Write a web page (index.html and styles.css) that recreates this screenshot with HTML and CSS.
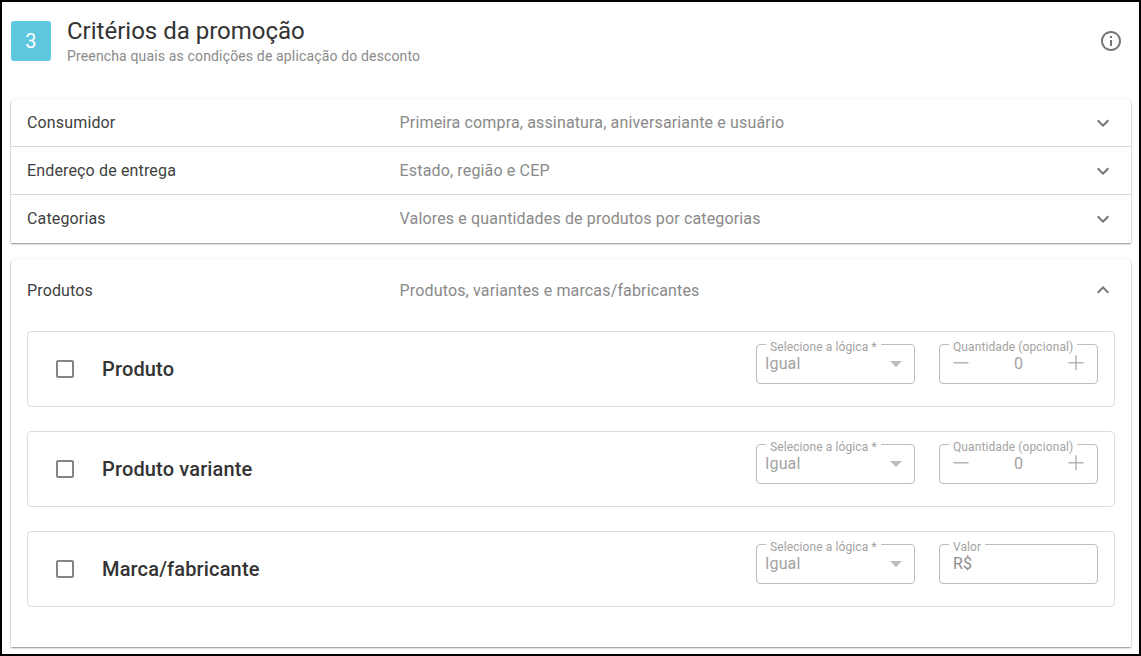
FILE: index.html
```html
<!DOCTYPE html>
<html lang="pt-BR">
<head>
  <meta charset="UTF-8">
  <title>Critérios da promoção</title>
  <link rel="stylesheet" href="styles.css">
</head>
<body>
<div class="frame">

  <!-- Header -->
  <div class="step-header">
    <div class="step-badge">3</div>
    <div class="step-titles">
      <h2>Critérios da promoção</h2>
      <p>Preencha quais as condições de aplicação do desconto</p>
    </div>
    <svg class="info-icon" width="24" height="24" viewBox="0 0 24 24"><path fill="#757575" d="M11 7h2v2h-2zm0 4h2v6h-2zm1-9C6.48 2 2 6.48 2 12s4.48 10 10 10 10-4.48 10-10S17.52 2 12 2zm0 18c-4.41 0-8-3.59-8-8s3.59-8 8-8 8 3.59 8 8-3.59 8-8 8z"/></svg>
  </div>

  <!-- Closed panels -->
  <div class="panel">
    <div class="panel-row">
      <span class="panel-name">Consumidor</span>
      <span class="panel-desc">Primeira compra, assinatura, aniversariante e usuário</span>
      <svg class="chevron" width="24" height="24" viewBox="0 0 24 24"><path fill="#757575" d="M16.59 8.59 12 13.17 7.41 8.59 6 10l6 6 6-6z"/></svg>
    </div>
    <div class="panel-row">
      <span class="panel-name">Endereço de entrega</span>
      <span class="panel-desc">Estado, região e CEP</span>
      <svg class="chevron" width="24" height="24" viewBox="0 0 24 24"><path fill="#757575" d="M16.59 8.59 12 13.17 7.41 8.59 6 10l6 6 6-6z"/></svg>
    </div>
    <div class="panel-row">
      <span class="panel-name">Categorias</span>
      <span class="panel-desc">Valores e quantidades de produtos por categorias</span>
      <svg class="chevron" width="24" height="24" viewBox="0 0 24 24"><path fill="#757575" d="M16.59 8.59 12 13.17 7.41 8.59 6 10l6 6 6-6z"/></svg>
    </div>
  </div>

  <!-- Open panel -->
  <div class="panel panel-open">
    <div class="panel-row panel-row-open">
      <span class="panel-name">Produtos</span>
      <span class="panel-desc">Produtos, variantes e marcas/fabricantes</span>
      <svg class="chevron" width="24" height="24" viewBox="0 0 24 24"><path fill="#757575" d="M12 8 6 14l1.41 1.41L12 10.83l4.59 4.58L18 14z"/></svg>
    </div>

    <div class="rule-list">
      <div class="rule-card">
        <span class="check"></span>
        <span class="rule-name">Produto</span>
        <div class="field">
          <span class="field-label">Selecione a lógica *</span>
          <span class="field-value">Igual</span>
          <span class="caret"></span>
        </div>
        <div class="field field-qty">
          <span class="field-label">Quantidade (opcional)</span>
          <svg width="16" height="16" viewBox="0 0 16 16"><path fill="#b5b5b5" d="M0.500 7h15v1.500H0.500z"/></svg>
          <span class="qty-value">0</span>
          <svg width="16" height="16" viewBox="0 0 16 16"><path fill="#b5b5b5" d="M0.500 7h6.750V0.250h1.500V7H15.500v1.500H8.750v6.750h-1.500V8.500H0.500z"/></svg>
        </div>
      </div>

      <div class="rule-card">
        <span class="check"></span>
        <span class="rule-name">Produto variante</span>
        <div class="field">
          <span class="field-label">Selecione a lógica *</span>
          <span class="field-value">Igual</span>
          <span class="caret"></span>
        </div>
        <div class="field field-qty">
          <span class="field-label">Quantidade (opcional)</span>
          <svg width="16" height="16" viewBox="0 0 16 16"><path fill="#b5b5b5" d="M0.500 7h15v1.500H0.500z"/></svg>
          <span class="qty-value">0</span>
          <svg width="16" height="16" viewBox="0 0 16 16"><path fill="#b5b5b5" d="M0.500 7h6.750V0.250h1.500V7H15.500v1.500H8.750v6.750h-1.500V8.500H0.500z"/></svg>
        </div>
      </div>

      <div class="rule-card">
        <span class="check"></span>
        <span class="rule-name">Marca/fabricante</span>
        <div class="field">
          <span class="field-label">Selecione a lógica *</span>
          <span class="field-value">Igual</span>
          <span class="caret"></span>
        </div>
        <div class="field field-money">
          <span class="field-label">Valor</span>
          <span class="field-value">R$</span>
        </div>
      </div>
    </div>
  </div>

</div>
</body>
</html>
```

FILE: styles.css
```css
* { box-sizing: border-box; }

html, body { margin: 0; padding: 0; }

body {
  font-family: Roboto, "Liberation Sans", sans-serif;
  background: #fff;
  color: #2b2b2b;
  letter-spacing: 0.15px;
}

.frame {
  width: 1141px;
  height: 656px;
  border: 2px solid #000;
  padding: 19px 8px 0 9px;
  overflow: hidden;
}

/* Header */
.step-header {
  display: flex;
  align-items: center;
  height: 40px;
  margin-bottom: 38px;
}

.step-badge {
  width: 40px;
  height: 40px;
  border-radius: 3px;
  background: #5fc6e0;
  color: #fff;
  font-size: 20px;
  display: flex;
  align-items: center;
  justify-content: center;
  margin-right: 16px;
}

.step-titles { flex: 1; padding-top: 1px; }

.step-titles h2 {
  margin: 0;
  font-size: 24px;
  font-weight: 400;
  line-height: 26px;
  letter-spacing: 0;
  color: #333;
}

.step-titles p {
  margin: 3px 0 0;
  font-size: 14px;
  line-height: 18px;
  color: #8a8a8a;
}

.info-icon { margin-right: 8px; }

/* Panels */
.panel {
  background: #fff;
  border-radius: 4px 4px 0 0;
  box-shadow: 0 1px 2px rgba(0,0,0,0.45), 0 0 2px rgba(0,0,0,0.06);
  margin-bottom: 16px;
}

.panel-row {
  display: flex;
  align-items: center;
  height: 48px;
  padding: 0 16px;
  border-bottom: 1px solid #d6d6d6;
  font-size: 16px;
}

.panel-row:last-child { border-bottom: none; padding-bottom: 1px; }

.panel-row-open { height: 64px; border-bottom: none; padding-bottom: 2px; }

.panel-name { width: 372.6px; color: #3f3f3f; }

.panel-desc { flex: 1; color: #8a8a8a; }

.panel-open { height: 388px; }

/* Rule cards */
.rule-list {
  display: flex;
  flex-direction: column;
  gap: 24px;
  padding: 8px 16px 0;
}

.rule-card {
  display: flex;
  align-items: center;
  height: 76px;
  padding: 0 16px 0 28px;
  border: 1px solid #dedede;
  border-radius: 4px;
}

.check {
  width: 18px;
  height: 18px;
  border: 2px solid #858585;
  border-radius: 2px;
  margin-right: 28px;
}

.rule-name {
  flex: 1;
  font-size: 20px;
  font-weight: 500;
  color: #333;
}

/* Outlined fields */
.field {
  position: relative;
  display: flex;
  align-items: center;
  width: 159px;
  height: 40px;
  padding: 0 8px;
  border: 1px solid #bdbdbd;
  border-radius: 4px;
  color: #a3a3a3;
  font-size: 16px;
  margin-top: -10px;
}

.field + .field { margin-left: 24px; }

.field-label {
  position: absolute;
  top: -5px;
  left: 9px;
  padding: 0 4px;
  background: #fff;
  font-size: 12px;
  line-height: 14px;
  letter-spacing: 0.1px;
  color: #a3a3a3;
  white-space: nowrap;
}

.field-value { flex: 1; position: relative; top: -1px; }

.caret {
  width: 0;
  height: 0;
  border-left: 6px solid transparent;
  border-right: 6px solid transparent;
  border-top: 6px solid #bdbdbd;
  margin-right: 4px;
}

.field-qty { padding: 0 13px; }

.field-qty svg { position: relative; top: -1px; }

.qty-value { flex: 1; text-align: center; position: relative; top: -1px; }

.field-money { padding: 0 13px; }

.field-money .field-value { color: #8f8f8f; }
```
